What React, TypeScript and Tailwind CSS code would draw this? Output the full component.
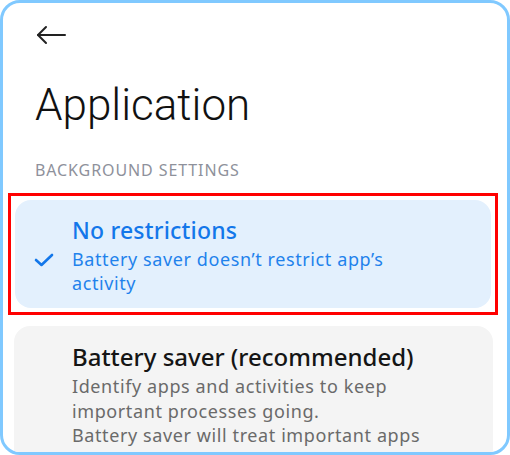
export default function App() {
  return (
    <div className="h-[455px] w-[510px] overflow-hidden bg-white">
      <div className="h-[455px] w-[510px] overflow-hidden rounded-[20px] border-[3px] border-[#80c9ff] bg-white font-['Noto_Sans',sans-serif]">
        <div className="pl-[33px] pt-[22px]">
          <svg className="block" width="30" height="20" viewBox="0 0 30 20" fill="none" stroke="#222" strokeWidth="2" strokeLinecap="round" strokeLinejoin="round">
            <path d="M2 10 H29" />
            <path d="M10 2 L2 10 L10 18" />
          </svg>
        </div>
        <h1 className="mt-[34px] pl-[32px] font-['Roboto',sans-serif] text-[44px] leading-[52px] font-light text-[#111]">
          Application
        </h1>
        <div className="mt-[29px] pl-[32px] text-[16px] leading-[20px] tracking-[0.9px] text-[#8e919b]">
          BACKGROUND SETTINGS
        </div>
        <div className="ml-[5px] mt-[13px] w-[490px] border-[3px] border-[#ff0000] p-[4px]">
          <div className="flex items-center rounded-[16px] bg-[#e3f0fd] pb-[13px] pt-[16px]">
            <div className="mt-[8px] flex w-[57px] justify-center">
              <svg className="block" width="20" height="14" viewBox="0 0 20 14" fill="none" stroke="#1377ea" strokeWidth="2.6" strokeLinecap="round" strokeLinejoin="round">
                <path d="M2 7 L7.5 12 L18 2" />
              </svg>
            </div>
            <div className="flex flex-col">
              <div className="text-[23px] leading-[28px] font-medium tracking-[0.2px] text-[#1377ea]">No restrictions</div>
              <div className="mt-[3px] text-[18px] leading-[24px] tracking-[0.6px] text-[#1f82ec]">
                Battery saver doesn’t restrict app’s
                <br />
                activity
              </div>
            </div>
          </div>
        </div>
        <div className="ml-[11px] mt-[11px] w-[479px] rounded-[16px] bg-[#f4f4f4] pb-[20px] pl-[58px] pt-[16px]">
          <div className="text-[24px] leading-[30px] font-medium text-[#151515]">Battery saver (recommended)</div>
          <div className="mt-[2px] text-[18px] leading-[24.5px] tracking-[0.6px] text-[#6a6a6a]">
            Identify apps and activities to keep
            <br />
            important processes going.
            <br />
            Battery saver will treat important apps
          </div>
        </div>
      </div>
    </div>
  );
}
